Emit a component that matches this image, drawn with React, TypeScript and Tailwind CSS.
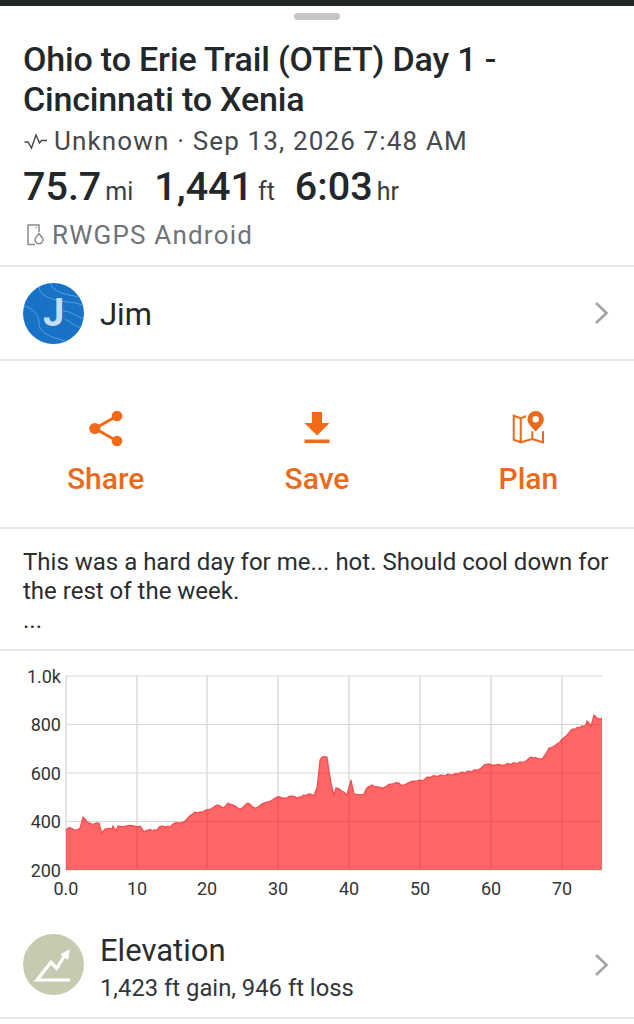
const raw: number[][] = "66,830 68,828 72,828.5 75,830 80,828 83,817 87,822 92,824 99,823 101.7,832.7 105,829 112,829 113,826 116,830.7 118,826 140,826 144,832 148,830 157,830 161,826 170,827 173,824 185,821 195,812 203,812 217,805 223,808 228,803 240,809 248,803 255,808 277,797 285,798 292,796 297,798 308,794 314,795 317,788 320,760 322,757 327,757 331,783 334,795 336,788 344,792 347,795 351,780 354,794 364,794 366,789 372,785 382,788 391,784 399,783 401,785 419,780 424,780 427,777 454,774 477,770 487,764 501,765 524,762 531,757 542,759 549,748 559,743 571,730 586,725 587,721 591,726 594,715 597,718 600,719 602,718"
  .split(" ")
  .map((p) => p.split(",").map(Number));

const dense: string[] = [];
raw.forEach((p, i) => {
  const next = raw[i + 1];
  if (!next) {
    dense.push(`${p[0]},${p[1]}`);
    return;
  }
  const steps = Math.max(1, Math.floor((next[0] - p[0]) / 2));
  for (let s = 0; s < steps; s++) {
    const t = s / steps;
    const x = p[0] + (next[0] - p[0]) * t;
    const n = s === 0 ? 0 : Math.sin(x * 12.9898) * 0.7;
    const y = p[1] + (next[1] - p[1]) * t + n;
    dense.push(`${x.toFixed(1)},${y.toFixed(1)}`);
  }
});
const pts = dense.join(" ");

function Chevron() {
  return (
    <svg width="16" height="24" viewBox="0 0 16 24" fill="none" className="shrink-0">
      <path d="M2 2 L12.5 12 L2 22" stroke="#a3a3a3" strokeWidth="2.6" />
    </svg>
  );
}

function Action({ label, children }: { label: string; children: React.ReactNode }) {
  return (
    <div className="flex flex-col items-center">
      <div className="h-[44px] flex items-center justify-center">{children}</div>
      <div className="mt-[11px] text-[30px] leading-[36px] font-medium text-[#ea6a1c]">{label}</div>
    </div>
  );
}

function Chart() {
  const xs = [66, 137, 207, 278, 349, 420, 491, 562];
  const xl = ["0.0", "10", "20", "30", "40", "50", "60", "70"];
  const ys = [676, 724.5, 773, 821.5, 870];
  const yl = ["1.0k", "800", "600", "400", "200"];
  return (
    <svg width="634" height="248" viewBox="0 651 634 248" className="block shrink-0" fontFamily="Roboto, sans-serif">
      {xs.map((x) => <line key={x} x1={x} x2={x} y1={676} y2={870} stroke="#d2d2d2" strokeWidth="1.2" />)}
      {ys.map((y) => <line key={y} x1={66} x2={602} y1={y} y2={y} stroke="#d8d8d8" strokeWidth="1.2" />)}
      <polygon points={`${pts} 602,870 66,870`} fill="#ff0000" fillOpacity="0.6" />
      <polyline points={pts} fill="none" stroke="#e8383b" strokeWidth="1.2" strokeOpacity="0.8" />
      {yl.map((t, i) => <text key={t} x="61" y={ys[i] + 6.5} textAnchor="end" fontSize="18" fill="#333">{t}</text>)}
      {xl.map((t, i) => <text key={t} x={xs[i]} y="895" textAnchor="middle" fontSize="18" fill="#333">{t}</text>)}
    </svg>
  );
}

export default function App() {
  return (
    <div className="w-[634px] h-[1024px] overflow-hidden bg-white flex flex-col font-['Roboto',sans-serif]">
      <div className="h-[6px] bg-[#212726] shrink-0" />
      <div className="h-[261px] shrink-0 border-b-2 border-[#e8e8e8] relative px-[23px]">
        <div className="absolute left-[294px] top-[7px] w-[46px] h-[7px] rounded-full bg-[#c6c6c6]" />
        <div className="pt-[33px] text-[34px] leading-[40px] font-medium text-[#22272a] tracking-[-0.17px]">
          Ohio to Erie Trail (OTET) Day 1 -<br />Cincinnati to Xenia
        </div>
        <div className="flex items-center mt-[4px] h-[36px] text-[#46494c] text-[26px] tracking-[1.15px]">
          <svg width="24" height="20" viewBox="0 0 24 20" fill="none" className="mr-[7px] shrink-0">
            <path d="M1.5 11 L5 11 L8.5 17 L13 4 L16.5 12 L18.5 9.5 L24 9.5" stroke="#46494c" strokeWidth="1.4" />
          </svg>
          Unknown · Sep 13, 2026 7:48 AM
        </div>
        <div className="flex items-baseline mt-[5px] h-[46px] leading-[46px] text-[#22272a]">
          <span className="text-[39.5px] font-medium">75.7</span>
          <span className="text-[25px] ml-[4px] text-[#3a3d40]">mi</span>
          <span className="text-[39.5px] font-medium ml-[21px]">1,441</span>
          <span className="text-[25px] ml-[5px] text-[#3a3d40]">ft</span>
          <span className="text-[39.5px] font-medium ml-[20px]">6:03</span>
          <span className="text-[25px] ml-[4px] text-[#3a3d40]">hr</span>
        </div>
        <div className="flex items-center mt-[7px] h-[36px] text-[#707376] text-[26px] tracking-[1.2px]">
          <svg width="20" height="22" viewBox="0 0 20 22" fill="none" className="mr-[5px] ml-[4px] shrink-0">
            <path d="M8 20.5 H1 V1 H12 V8" stroke="#8a8a8a" strokeWidth="1.5" />
            <circle cx="9" cy="3.5" r="0.8" fill="#8a8a8a" />
            <path d="M12 9.5 L15 13.5 A3.8 3.8 0 1 1 9 13.5 Z" stroke="#8a8a8a" strokeWidth="1.4" />
          </svg>
          RWGPS Android
        </div>
      </div>

      <div className="h-[94px] shrink-0 border-b-2 border-[#e8e8e8] flex items-center pl-[23px] pr-[24px]">
        <div className="relative w-[61px] h-[61px] rounded-full overflow-hidden bg-[#1873c7] shrink-0 flex items-center justify-center">
          <svg width="61" height="61" viewBox="0 0 61 61" className="absolute inset-0" fill="none" stroke="#5a9fdd" strokeWidth="1">
            <path d="M16 0 C14 10 24 16 38 18 C48 20 56 19 62 24" />
            <path d="M28 0 C28 6 36 10 46 12 C52 13 58 14 62 17" />
            <path d="M0 23 C10 24 16 32 16 40 C16 50 28 54 42 58 L48 62" />
            <path d="M40 28 C50 28 56 36 62 36" />
            <path d="M42 36 C50 40 54 46 62 44" />
          </svg>
          <span className="relative text-[38px] leading-[38px] font-bold text-[#c4def5]">J</span>
        </div>
        <div className="ml-[16px] mt-[5px] text-[31px] text-[#22272a] flex-1">Jim</div>
        <Chevron />
      </div>

      <div className="h-[168px] shrink-0 border-b-2 border-[#e8e8e8] grid grid-cols-3 pt-[45px]">
        <Action label="Share">
          <svg width="34" height="37" viewBox="0 0 34 37">
            <path d="M28 6 L6 18.5 L28 31" fill="none" stroke="#f26a18" strokeWidth="3" />
            <circle cx="28" cy="6" r="5.3" fill="#f26a18" />
            <circle cx="5.8" cy="18.5" r="5.6" fill="#f26a18" />
            <circle cx="28" cy="31" r="5.3" fill="#f26a18" />
          </svg>
        </Action>
        <Action label="Save">
          <svg width="26" height="33" viewBox="0 0 26 33" fill="#f26a18">
            <path d="M8 0 H18 V11 H25.5 L13 23.5 L0.5 11 H8 Z" />
            <rect x="0.5" y="27.5" width="25" height="3.6" />
          </svg>
        </Action>
        <Action label="Plan">
          <svg width="34" height="36" viewBox="0 0 34 36" fill="none" stroke="#ea6a1c" strokeWidth="2">
            <path d="M9.7 8.3 L2.7 5.7 V29.7 L9.7 32.3 Z" />
            <path d="M9.7 8.3 L15 6 M9.7 32.3 L21.3 29 L32 32.3 V21.3 M21.3 29 V21.3" />
            <path fillRule="evenodd" fill="#ea6a1c" stroke="none" d="M24.7 1 A8.2 8.2 0 0 1 32.9 9.2 C32.9 13.5 28.5 17.5 24.7 21.5 C20.9 17.5 16.5 13.5 16.5 9.2 A8.2 8.2 0 0 1 24.7 1 Z M24.7 6 A3.2 3.2 0 1 0 24.7 12.4 A3.2 3.2 0 1 0 24.7 6 Z" />
          </svg>
        </Action>
      </div>

      <div className="h-[122px] shrink-0 border-b-2 border-[#e8e8e8] px-[23px] pt-[19px] text-[24px] leading-[29px] text-[#2a2d30]">
        This was a hard day for me... hot. Should cool down for the rest of the week.<br />...
      </div>

      <Chart />

      <div className="h-[120px] shrink-0 border-b-2 border-[#e8e8e8] flex items-center pl-[23px] pr-[24px] pt-[13px]">
        <svg width="61" height="61" viewBox="0 0 61 61" className="shrink-0">
          <circle cx="30.5" cy="30.5" r="30.5" fill="#c6cab0" />
          <path d="M47 46 H14 L28 28.3 L33.7 34.3 L42 21" fill="none" stroke="#ffffff" strokeWidth="3.2" />
          <path d="M38 20.3 L46.3 16 L44.7 25.3 Z" fill="#ffffff" stroke="#ffffff" strokeWidth="1" />
        </svg>
        <div className="ml-[16px] flex-1 mt-[6px]">
          <div className="text-[31px] leading-[36px] text-[#2a2d30]">Elevation</div>
          <div className="mt-[4px] text-[23.8px] leading-[30px] text-[#33363a]">1,423 ft gain, 946 ft loss</div>
        </div>
        <Chevron />
      </div>
    </div>
  );
}
